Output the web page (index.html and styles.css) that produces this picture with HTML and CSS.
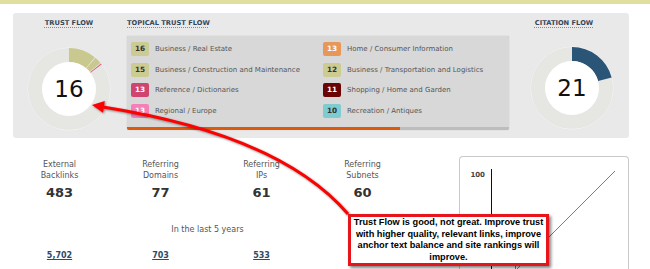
FILE: index.html
```html
<!DOCTYPE html>
<html lang="en">
<head>
  <meta charset="UTF-8" />
  <title>Trust Flow</title>
  <link rel="stylesheet" href="styles.css">
</head>
<body>

  <div class="topbar"></div>

  <div class="panel">
    <div class="flow-col trust">
      <div class="label"><span>TRUST FLOW</span></div>
      <div class="donut">
        <svg width="84" height="84" viewBox="0 0 84 84">
          <circle cx="42" cy="42" r="41" fill="none" stroke="#f6f6f6" stroke-width="1"/>
          <circle cx="42" cy="42" r="34" fill="none" stroke="#e6e6e3" stroke-width="14"/>
          <g transform="rotate(-90 42 42)" fill="none" stroke-width="14">
            <circle cx="42" cy="42" r="34" stroke="#c9c98f" stroke-dasharray="23.1 200" stroke-dashoffset="0"/>
            <circle cx="42" cy="42" r="34" stroke="#c9c98f" stroke-dasharray="5.9 200" stroke-dashoffset="-23.8"/>
            <circle cx="42" cy="42" r="34" stroke="#d9587e" stroke-dasharray="1 200" stroke-dashoffset="-30.4"/>
          </g>
          <circle cx="42" cy="42" r="27" fill="#fff"/>
        </svg>
        <span class="donut-num">16</span>
      </div>
    </div>

    <div class="topical">
      <div class="label"><span>TOPICAL TRUST FLOW</span></div>
      <div class="topics">
        <ul class="topic-grid">
          <li class="topic"><span class="badge olive">16</span>Business / Real Estate</li>
          <li class="topic"><span class="badge olive">15</span>Business / Construction and Maintenance</li>
          <li class="topic"><span class="badge rose">13</span>Reference / Dictionaries</li>
          <li class="topic"><span class="badge pink">13</span>Regional / Europe</li>
          <li class="topic"><span class="badge orange">13</span>Home / Consumer Information</li>
          <li class="topic"><span class="badge olive">12</span>Business / Transportation and Logistics</li>
          <li class="topic"><span class="badge maroon">11</span>Shopping / Home and Garden</li>
          <li class="topic"><span class="badge teal">10</span>Recreation / Antiques</li>
        </ul>
        <div class="bar"><div class="bar-fill" style="width: 71.5%"></div></div>
      </div>
    </div>

    <div class="flow-col citation">
      <div class="label"><span>CITATION FLOW</span></div>
      <div class="donut">
        <svg width="84" height="84" viewBox="0 0 84 84">
          <circle cx="42" cy="42" r="41" fill="none" stroke="#f6f6f6" stroke-width="1"/>
          <circle cx="42" cy="42" r="34" fill="none" stroke="#e6e6e3" stroke-width="14"/>
          <circle cx="42" cy="42" r="34" fill="none" stroke="#2b5577" stroke-width="14"
                  stroke-dasharray="44.5 200" transform="rotate(-90 42 42)"/>
          <circle cx="42" cy="42" r="27" fill="#fff"/>
        </svg>
        <span class="donut-num">21</span>
      </div>
    </div>
  </div>

  <div class="lower">
    <div class="stats">
      <div class="stat-row">
        <div class="stat">
          <div class="stat-label">External<br>Backlinks</div>
          <div class="stat-num">483</div>
        </div>
        <div class="stat">
          <div class="stat-label">Referring<br>Domains</div>
          <div class="stat-num">77</div>
        </div>
        <div class="stat">
          <div class="stat-label">Referring<br>IPs</div>
          <div class="stat-num">61</div>
        </div>
        <div class="stat">
          <div class="stat-label">Referring<br>Subnets</div>
          <div class="stat-num">60</div>
        </div>
      </div>
      <div class="period">In the last 5 years</div>
      <div class="link-row">
        <span><a href="#">5,702</a></span>
        <span><a href="#">703</a></span>
        <span><a href="#">533</a></span>
        <span></span>
      </div>
    </div>

    <div class="chart">
      <svg width="168" height="112" viewBox="0 0 168 112">
        <text class="axis-text" x="25" y="19.5" text-anchor="end">100</text>
        <line x1="31.5" y1="12" x2="31.5" y2="112" stroke="#111" stroke-width="1"/>
        <line x1="155" y1="14" x2="47" y2="122" stroke="#7a7a7a" stroke-width="1"/>
        <line x1="55.5" y1="107" x2="55.5" y2="112" stroke="#9b59c8" stroke-width="1"/>
      </svg>
    </div>
  </div>

  <svg class="arrow" width="650" height="269" viewBox="0 0 650 269">
    <path d="M348 214 Q280 135 103 107" fill="none" stroke="#ff0000" stroke-width="3"/>
    <polygon points="92,105 104.8,101 103,112.8" fill="#ff0000"/>
  </svg>

  <div class="callout">
    Trust Flow is good, not great. Improve trust<br>
    with higher quality, relevant links, improve<br>
    anchor text balance and site rankings will<br>
    improve.
  </div>

</body>
</html>
```

FILE: styles.css
```css
body {
  margin: 0;
  width: 650px;
  height: 269px;
  overflow: hidden;
  position: relative;
  background: #fff;
  font-family: "DejaVu Sans", Verdana, sans-serif;
}
.topbar {
  height: 4px;
  background: #e1df9f;
}
.panel {
  display: flex;
  margin: 9px 0 0 13px;
  width: 616px;
  height: 125px;
  box-sizing: border-box;
  padding-top: 5px;
  background: #e9e9e9;
  border-radius: 3px;
}
.label {
  font-size: 6.7px;
  font-weight: bold;
  line-height: 10px;
  color: #34465a;
}
.label span {
  text-decoration: underline dotted #7d8b9a;
  text-underline-offset: 2px;
}
.flow-col {
  display: flex;
  flex-direction: column;
  align-items: center;
}
.trust {
  width: 112px;
}
.citation {
  flex: 1;
  padding-right: 10px;
}
.donut {
  display: grid;
  width: 84px;
  height: 84px;
  margin-top: 19px;
}
.donut > * {
  grid-area: 1 / 1;
}
.citation .donut {
  margin-top: 18px;
  margin-left: 16px;
}
.donut-num {
  place-self: center;
  font-size: 23px;
  color: #111;
}
.topical {
  width: 382px;
  margin-left: 2px;
}
.topics {
  margin-top: 8px;
  padding: 6px 0 0 4px;
  background: #d8d8d8;
  border-radius: 2px;
  box-shadow: 0 0 1px rgba(0, 0, 0, .3);
  overflow: hidden;
}
.topic-grid {
  list-style: none;
  margin: 0;
  padding: 0;
  display: grid;
  grid-template-columns: 192px 1fr;
  grid-template-rows: repeat(4, 14px);
  row-gap: 6.5px;
  grid-auto-flow: column;
}
.topic {
  display: flex;
  align-items: center;
  font-size: 7px;
  color: #555;
  white-space: nowrap;
}
.badge {
  width: 18px;
  height: 14px;
  margin-right: 6px;
  border-radius: 2px;
  font-size: 7.3px;
  font-weight: bold;
  line-height: 14px;
  text-align: center;
  color: #333;
}
.olive { background: #cbcb92; }
.rose { background: #cf4570; color: #fff; }
.pink { background: #f580b8; color: #fff; }
.orange { background: #e8975a; color: #fff; }
.maroon { background: #6b0505; color: #fff; }
.teal { background: #7ecbd0; }
.bar {
  height: 3px;
  margin: 9px 0 0 -4px;
  background: #bdbdbd;
}
.bar-fill {
  height: 100%;
  background: #dc5a0c;
}
.lower {
  display: flex;
  margin-top: 18px;
}
.stats {
  width: 404px;
  margin-left: 9px;
  padding-top: 3px;
}
.stat-row, .link-row {
  display: grid;
  grid-template-columns: repeat(4, 101px);
  text-align: center;
}
.stat-label {
  font-size: 8px;
  line-height: 11px;
  color: #555;
}
.stat-num {
  margin-top: 4px;
  font-size: 13px;
  font-weight: bold;
  line-height: 16px;
  color: #333;
}
.period {
  margin-top: 23px;
  padding-right: 7px;
  font-size: 8px;
  line-height: 11px;
  color: #555;
  text-align: center;
}
.link-row {
  margin-top: 15px;
  font-size: 8px;
  line-height: 11px;
}
.link-row a {
  font-weight: bold;
  color: #2e4a68;
}
.chart {
  width: 170px;
  height: 113px;
  margin-left: 46px;
  box-sizing: border-box;
  border: 1px solid #c9c9c9;
  border-bottom: 0;
  border-radius: 4px 4px 0 0;
  background: #fff;
}
.chart svg {
  display: block;
}
.axis-text {
  font-size: 7px;
  font-weight: bold;
  fill: #444;
}
.arrow {
  position: absolute;
  left: 0;
  top: 0;
  pointer-events: none;
  filter: drop-shadow(1.5px 1.5px 1px rgba(0, 0, 0, .45));
}
.callout {
  position: absolute;
  left: 348px;
  top: 214px;
  width: 201px;
  height: 52px;
  box-sizing: border-box;
  border: 3px solid #e8141c;
  background: #fff;
  box-shadow: 2px 2px 3px rgba(0, 0, 0, .5);
  font-family: "Liberation Sans", Arial, sans-serif;
  font-size: 9.2px;
  font-weight: bold;
  line-height: 11.5px;
  text-align: center;
  color: #000;
}
```
